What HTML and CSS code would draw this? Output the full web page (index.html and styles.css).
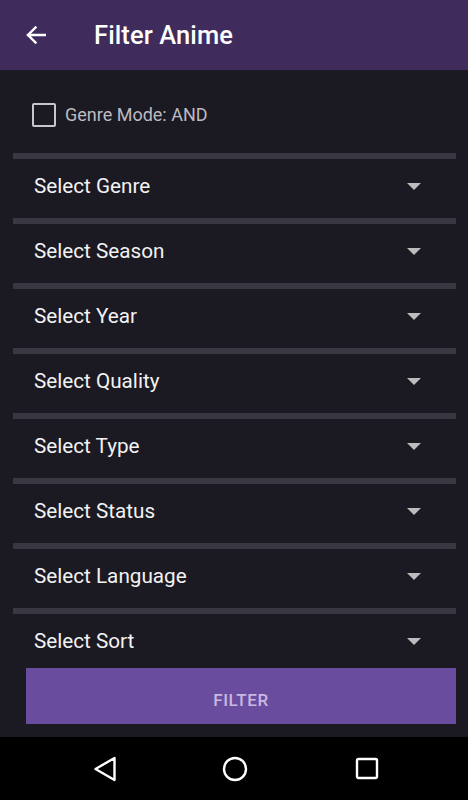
FILE: index.html
```html
<!DOCTYPE html>
<html lang="en">
 <head>
  <meta charset="utf-8"/>
  <title>Filter Anime</title>
  <meta name="viewport" content="width=device-width, initial-scale=1.0"/>
  <link rel="stylesheet" href="styles.css">
 </head>
 <body>
	<header class="appbar">
		<span class="back">
			<svg width="20" height="18" viewBox="0 0 20 18"><path d="M19 9H2M9.5 1.5L2 9l7.5 7.5" fill="none" stroke="#fff" stroke-width="2.4" stroke-linecap="square"/></svg>
		</span>
		<h1>Filter Anime</h1>
	</header>

	<main class="content">
		<label class="mode">
			<span class="box"></span>
			Genre Mode: AND
		</label>

		<ul class="fields">
			<li><div class="bar"></div><div class="select">Select Genre<i class="caret"></i></div></li>
			<li><div class="bar"></div><div class="select">Select Season<i class="caret"></i></div></li>
			<li><div class="bar"></div><div class="select">Select Year<i class="caret"></i></div></li>
			<li><div class="bar"></div><div class="select">Select Quality<i class="caret"></i></div></li>
			<li><div class="bar"></div><div class="select">Select Type<i class="caret"></i></div></li>
			<li><div class="bar"></div><div class="select">Select Status<i class="caret"></i></div></li>
			<li><div class="bar"></div><div class="select">Select Language<i class="caret"></i></div></li>
			<li><div class="bar"></div><div class="select">Select Sort<i class="caret"></i></div></li>
		</ul>

		<button class="filter">FILTER</button>
	</main>

	<nav class="sysnav">
		<svg width="24" height="26" viewBox="0 0 24 26"><path d="M21.5 2L2.5 13l19 11z" fill="none" stroke="#fff" stroke-width="2.4" stroke-linejoin="round"/></svg>
		<svg width="26" height="26" viewBox="0 0 26 26"><circle cx="13" cy="13" r="11" fill="none" stroke="#fff" stroke-width="2.4"/></svg>
		<svg width="24" height="24" viewBox="0 0 24 24"><rect x="2" y="2" width="20" height="19" rx="1.5" fill="none" stroke="#fff" stroke-width="2.4"/></svg>
	</nav>
 </body>
</html>
```

FILE: styles.css
```css
*{margin:0; padding:0; box-sizing:border-box;}
body{ width:468px; height:800px; background:#1b1922; font-family:Roboto, "Noto Sans", sans-serif; display:flex; flex-direction:column; overflow:hidden;}
li{list-style:none;}

/* 상단 바 */
.appbar{ height:70px; background:#3f2c5d; display:flex; align-items:center; color:#fff; flex-shrink:0;}
	.appbar .back{ width:20px; height:18px; margin-left:26px; display:flex;}
	.appbar h1{ margin-left:48px; font-size:25.5px; font-weight:500; letter-spacing:0.1px;}

.content{ flex:1; display:flex; flex-direction:column;}
	.mode{ height:83px; display:flex; align-items:center; padding:6px 0 0 32px; color:#bdbbc2; font-size:18px;}
		.mode .box{ width:24px; height:24px; border:2px solid #c8c6cc; border-radius:2px; margin-right:9px;}

	.fields li .bar{ height:6px; margin:0 12px 0 13px; background:#393741;}
	.fields li .select{ height:59px; margin:0 12px 0 13px; padding:0 35px 5px 21px; display:flex; align-items:center; justify-content:space-between; color:#f2f2f2; font-size:20.7px;}
	.fields li:last-child .select{ height:54px; padding-bottom:0;}
		.caret{ width:0; height:0; border-left:7px solid transparent; border-right:7px solid transparent; border-top:7px solid #bcbcbc;}

	.filter{ height:56px; margin:0 12px 0 26px; padding-top:7px; background:#6a4c9f; border:0; color:#c8b8e2; font-family:Roboto, sans-serif; font-size:17px; font-weight:500; letter-spacing:0.6px;}

/* 하단 시스템 바 */
.sysnav{ height:63px; background:#000; display:flex; align-items:center; flex-shrink:0;}
	.sysnav svg:nth-child(1){ margin-left:93px;}
	.sysnav svg:nth-child(2){ margin-left:105px;}
	.sysnav svg:nth-child(3){ margin-left:107px;}
```
